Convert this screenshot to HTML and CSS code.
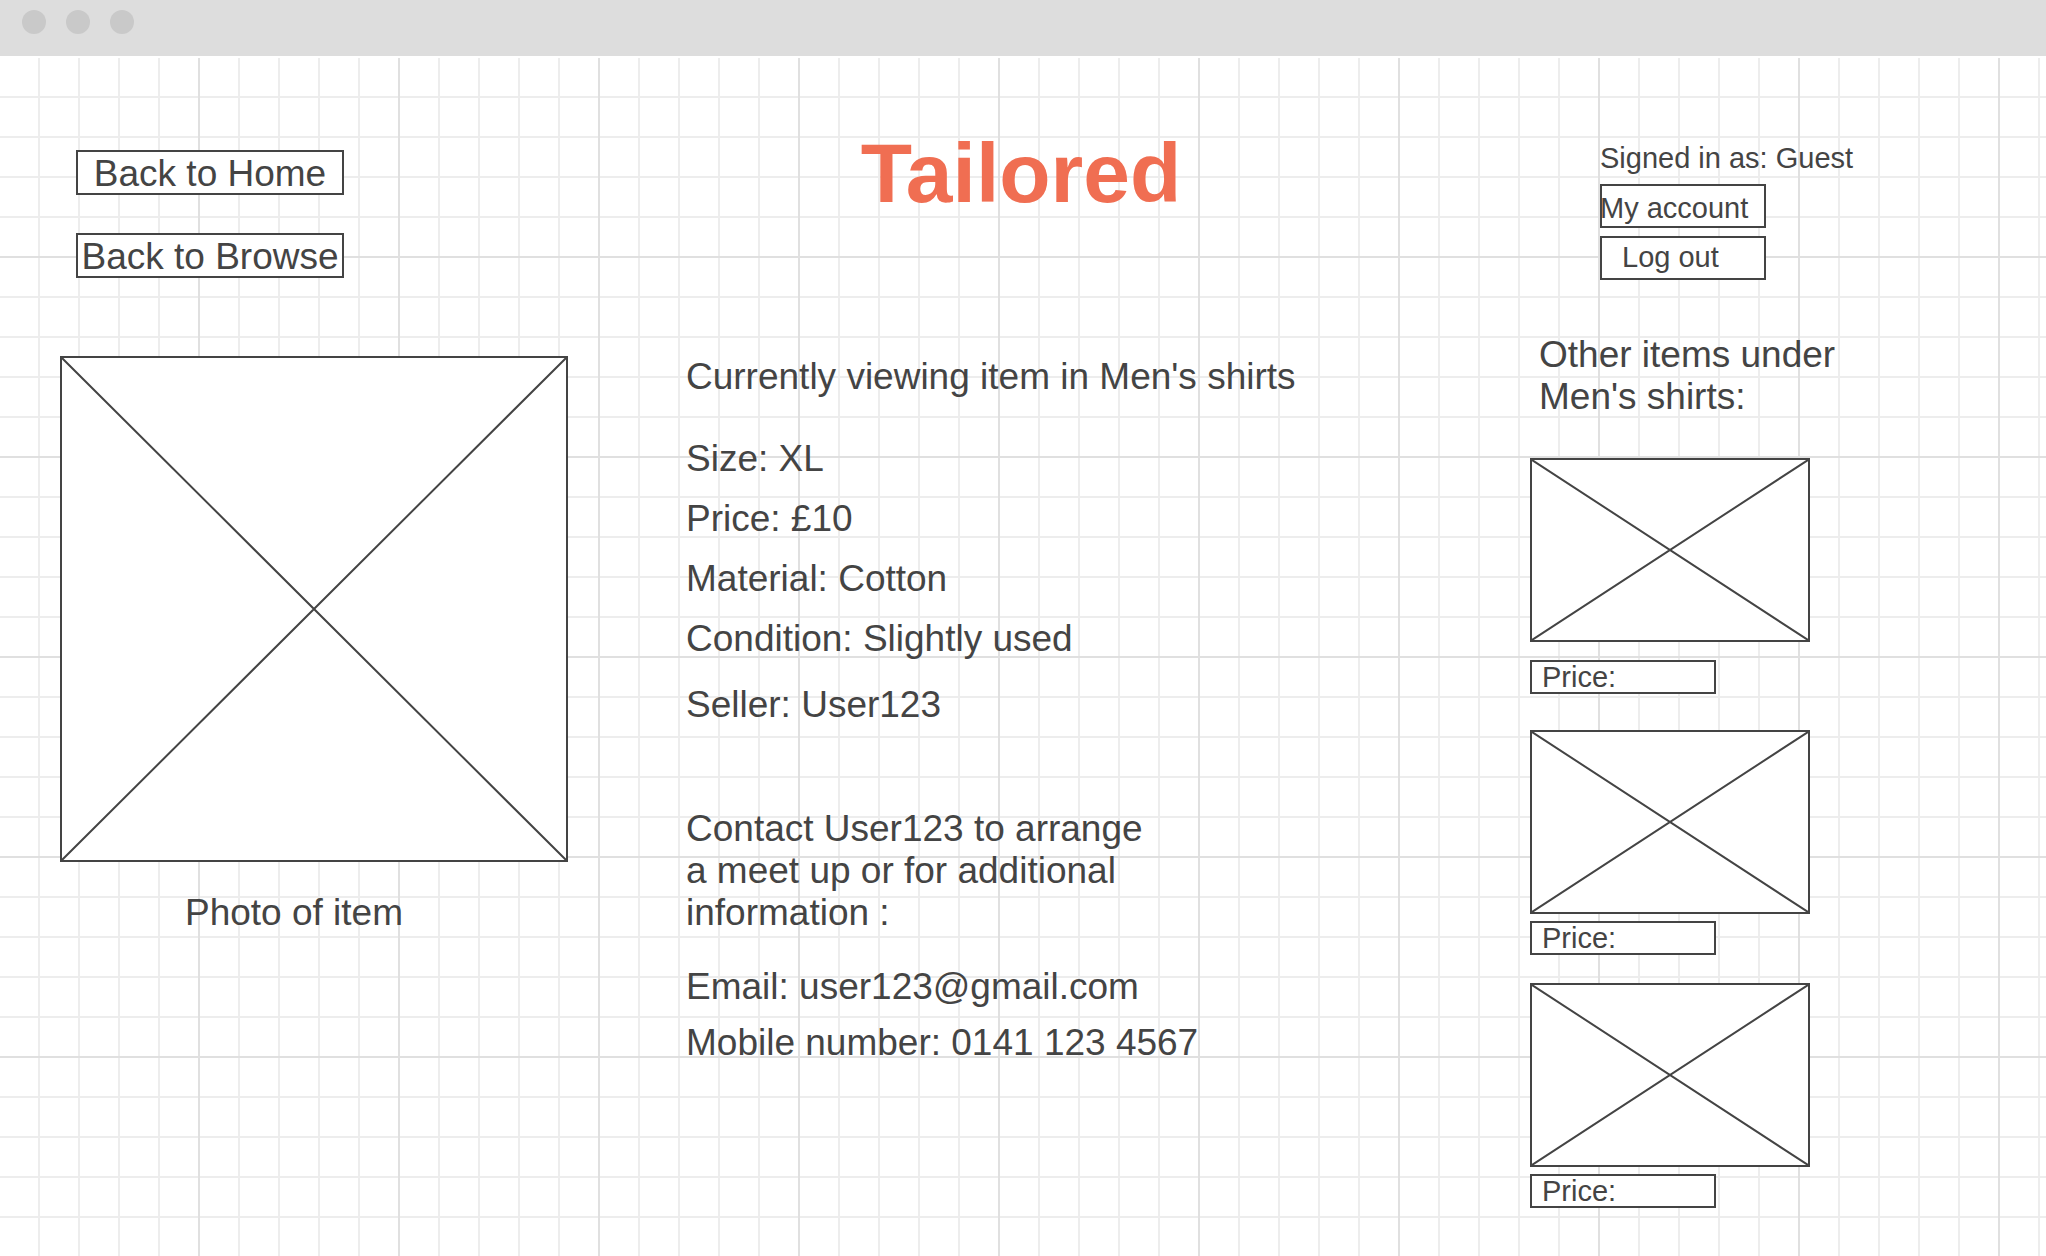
FILE: index.html
```html
<!DOCTYPE html>
<html lang="en">
<head>
  <meta charset="utf-8">
  <meta name="viewport" content="width=device-width, initial-scale=1">
  <title>Tailored</title>
  <link rel="stylesheet" href="styles.css">
</head>
<body>
  <div class="window-bar" aria-hidden="true">
    <span class="dot"></span><span class="dot"></span><span class="dot"></span>
  </div>
  <div class="canvas">
    <header class="header">
      <nav class="nav">
        <a class="box nav-link" href="#home">Back to Home</a>
        <a class="box nav-link" href="#browse">Back to Browse</a>
      </nav>
      <h1 class="title">Tailored</h1>
      <div class="account">
        <p class="signed-in">Signed in as: Guest</p>
        <button class="box account-button" type="button">My account</button>
        <button class="box account-button log-out" type="button">Log out</button>
      </div>
    </header>
    <main class="main">
      <figure class="item">
        <svg class="placeholder item-photo" viewBox="0 0 100 100" preserveAspectRatio="none" role="img" aria-label="Photo of item"><path d="M0 0L100 100M100 0L0 100"/></svg>
        <figcaption class="item-caption">Photo of item</figcaption>
      </figure>
      <section class="details">
        <h2 class="text">Currently viewing item in Men's shirts</h2>
        <div class="specs">
          <p>Size: XL</p>
          <p>Price: £10</p>
          <p>Material: Cotton</p>
          <p>Condition: Slightly used</p>
        </div>
        <p class="seller">Seller: User123</p>
        <p class="contact">Contact User123 to arrange a meet up or for additional information :</p>
        <div class="contact-list">
          <p>Email: user123@gmail.com</p>
          <p>Mobile number: 0141 123 4567</p>
        </div>
      </section>
      <aside class="others">
        <h2 class="text others-title">Other items under Men's shirts:</h2>
        <div class="card card-first">
          <svg class="placeholder thumb" viewBox="0 0 100 100" preserveAspectRatio="none" aria-hidden="true"><path d="M0 0L100 100M100 0L0 100"/></svg>
          <p class="box price">Price:</p>
        </div>
        <div class="card">
          <svg class="placeholder thumb" viewBox="0 0 100 100" preserveAspectRatio="none" aria-hidden="true"><path d="M0 0L100 100M100 0L0 100"/></svg>
          <p class="box price">Price:</p>
        </div>
        <div class="card">
          <svg class="placeholder thumb" viewBox="0 0 100 100" preserveAspectRatio="none" aria-hidden="true"><path d="M0 0L100 100M100 0L0 100"/></svg>
          <p class="box price">Price:</p>
        </div>
      </aside>
    </main>
  </div>
</body>
</html>
```
FILE: styles.css
```css
* {
  box-sizing: border-box;
  margin: 0;
}

body {
  display: flex;
  flex-direction: column;
  min-height: 100vh;
  background: #fff;
  color: #444;
  font: 37px/42px "Liberation Sans", Arial, sans-serif;
}

.window-bar {
  display: flex;
  gap: 20px;
  height: 58px;
  padding: 10px 22px;
  background: #ddd;
  border-bottom: 2px solid #fff;
}

.dot {
  width: 24px;
  height: 24px;
  border-radius: 50%;
  background: #c9c9c9;
}

/* Graph paper: a line every 40px, a darker one every 200px */
.canvas {
  flex: 1;
  background-image:
    linear-gradient(to right, transparent 198px, #e0e0e0 198px),
    linear-gradient(to bottom, transparent 198px, #e0e0e0 198px),
    linear-gradient(to right, transparent 38px, #ededed 38px),
    linear-gradient(to bottom, transparent 38px, #ededed 38px);
  background-size: 200px 200px, 200px 200px, 40px 40px, 40px 40px;
}

.box {
  display: flex;
  align-items: center;
  border: 0;
  padding: 0;
  background: #fff;
  box-shadow: inset 0 0 0 2px #444;
  color: inherit;
  text-decoration: none;
}

.header {
  display: grid;
  grid-template-columns: 1fr auto 1fr;
  align-items: start;
  padding: 67px 80px 0 76px;
}

.nav {
  display: flex;
  flex-direction: column;
  gap: 38px;
  width: 268px;
  padding-top: 25px;
}

.nav-link {
  justify-content: center;
  height: 45px;
  padding-top: 3px;
  white-space: nowrap;
}

.title {
  color: #f06e52;
  font-size: 84px;
  line-height: 96px;
}

.account {
  justify-self: end;
  width: 366px;
  padding-top: 17px;
  font-size: 29px;
  line-height: 32px;
}

.account-button {
  width: 166px;
  height: 44px;
  margin-top: 8px;
  padding-top: 4px;
  font: inherit;
}

.signed-in {
  padding-bottom: 2px;
}

.log-out {
  padding: 0 0 2px 22px;
}

.main {
  display: grid;
  grid-template-columns: 626fr 844fr 456fr;
  align-items: start;
  padding: 54px 60px 40px;
}

.placeholder {
  display: block;
  border: 2px solid #444;
  background: #fff;
}

.placeholder path {
  stroke: #444;
  stroke-width: 2px;
  vector-effect: non-scaling-stroke;
}

.item {
  padding-top: 22px;
}

.item-photo {
  width: 508px;
  height: 506px;
}

.item-caption {
  width: 508px;
  padding: 30px 40px 0 0;
  text-align: center;
}

.details {
  padding-top: 22px;
}

.text {
  font-size: 37px;
  font-weight: 400;
}

.specs {
  display: grid;
  gap: 18px;
  margin: 40px 0 24px;
}

.contact {
  max-width: 480px;
  margin: 82px 0 32px;
}

.contact-list {
  display: grid;
  gap: 14px;
}

.others-title {
  max-width: 330px;
  padding-left: 9px;
}

.card {
  display: grid;
  gap: 7px;
  margin-top: 28px;
}

.card-first {
  gap: 18px;
  margin: 40px 0 36px;
}

.thumb {
  width: 280px;
  height: 184px;
}

.price {
  width: 186px;
  height: 34px;
  padding-left: 12px;
  font-size: 29px;
  line-height: 32px;
}
```
